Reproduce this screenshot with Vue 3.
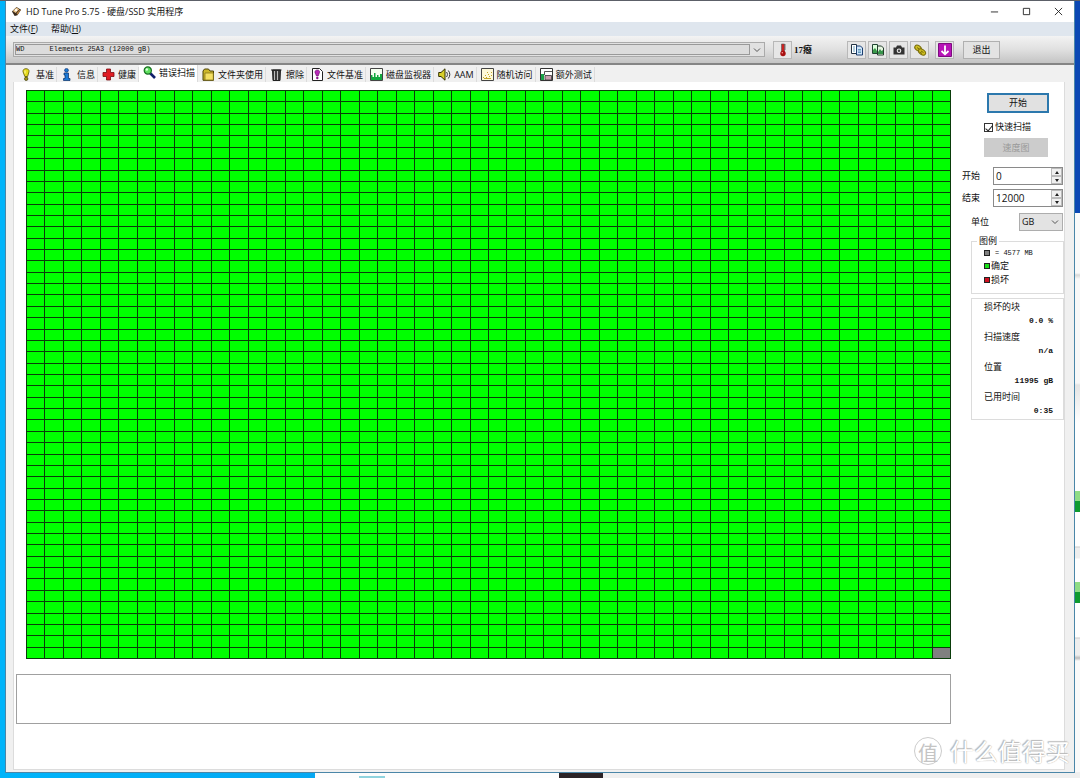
<script setup>
import { ref } from 'vue'

const cellCount = 50 * 50
const tabs = [
  { icon: 'bulb', label: '基准' },
  { icon: 'info', label: '信息' },
  { icon: 'cross', label: '健康' },
  { icon: 'lens', label: '错误扫描' },
  { icon: 'folder', label: '文件夹使用' },
  { icon: 'bin', label: '擦除' },
  { icon: 'filebulb', label: '文件基准' },
  { icon: 'chart', label: '磁盘监视器' },
  { icon: 'speaker', label: 'AAM' },
  { icon: 'scatter', label: '随机访问' },
  { icon: 'extra', label: '额外测试' },
]
const active = ref('lens')
const quick = ref(true)
const from = ref('0')
const to = ref('12000')
const stats = [
  { label: '损坏的块', value: '0.0 %' },
  { label: '扫描速度', value: 'n/a' },
  { label: '位置', value: '11995 gB' },
  { label: '已用时间', value: '0:35' },
]
</script>

<template>
  <div class="desktop">
    <div class="behind-right" aria-hidden="true">
      <i class="wall"></i><i class="page"></i><i class="green"></i><i class="page2"></i><i class="green"></i><i class="page3"></i>
    </div>
    <div class="behind-bottom" aria-hidden="true">
      <i class="sky"></i><i class="light"></i><i class="dark"></i><i class="grey"></i>
    </div>

    <div class="window">
      <header class="titlebar">
        <svg class="app-icon" viewBox="0 0 12 12">
          <path d="M1 6 6 1l5 3-4 6-3 1z" fill="#3a2b1c" />
          <path d="M2 5.500 6 1.500l3 2-4 4z" fill="#e9c48c" />
          <path d="M6 8 9.500 4l1 .6L7 9.500z" fill="#b98142" />
          <circle cx="5.500" cy="4.500" r="1.200" fill="#fff" />
        </svg>
        <h1>HD Tune Pro 5.75 - 硬盘/SSD 实用程序</h1>
        <div class="win-buttons">
          <button aria-label="最小化"><svg viewBox="0 0 10 10"><path d="M1 5.500h8" /></svg></button>
          <button aria-label="最大化"><svg viewBox="0 0 10 10"><path d="M1.500 1.500h7v7h-7z" /></svg></button>
          <button aria-label="关闭"><svg viewBox="0 0 10 10"><path d="m1 1 8 8M9 1 1 9" /></svg></button>
        </div>
      </header>

      <nav class="menu">
        <button>文件(<u>F</u>)</button>
        <button>帮助(<u>H</u>)</button>
      </nav>

      <div class="toolbar">
        <div class="drive">
          <select aria-label="硬盘">
            <option>WD&nbsp;&nbsp;&nbsp;&nbsp;&nbsp;&nbsp;Elements 25A3 (12000 gB)</option>
          </select>
          <svg viewBox="0 0 8 8"><path d="m1 2.500 3 3 3-3" /></svg>
        </div>
        <button class="tool" aria-label="温度">
          <svg viewBox="0 0 14 14">
            <path d="M5.500 1h3v8h-3z" fill="#c22" stroke="#555" stroke-width=".6" />
            <path d="M8.500 2H10M8.500 4H10M8.500 6H10" stroke="#444" stroke-width=".7" />
            <circle cx="7" cy="10.500" r="2.700" fill="#a81111" />
            <circle cx="6.300" cy="9.800" r=".8" fill="#f99" />
          </svg>
        </button>
        <strong class="temp">17癈</strong>
        <div class="tools">
          <button class="tool" aria-label="复制信息">
            <svg viewBox="0 0 14 14">
              <path d="M1.500 1.500h5v9h-5z" fill="#fff" stroke="#234" />
              <path d="M3 4h2M3 6h2M3 8h2" stroke="#48a" stroke-width=".8" />
              <path d="M6.500 3h4l2 2v7h-6z" fill="#cfe4fa" stroke="#1b3f70" />
              <path d="M8 6.500h3M8 8h3M8 9.500h3" stroke="#48a" stroke-width=".8" />
            </svg>
          </button>
          <button class="tool" aria-label="复制截图">
            <svg viewBox="0 0 14 14">
              <path d="M1.500 1.500h5v9h-5z" fill="#dfd" stroke="#243" />
              <path d="M2 7l2-2 2 3v2H2z" fill="#3a9a4a" />
              <path d="M6.500 3h4l2 2v7h-6z" fill="#e6f5e0" stroke="#243c2c" />
              <path d="M7 9l2-3 1.500 2L12 7v4H7z" fill="#36944a" />
            </svg>
          </button>
          <button class="tool" aria-label="截图">
            <svg viewBox="0 0 14 14">
              <path d="M1.500 4.500H4L5 2.500h4l1 2h2.500v7h-11z" fill="#333" />
              <circle cx="7" cy="7.800" r="2.300" fill="#eee" />
              <circle cx="7" cy="7.800" r="1.200" fill="#444" />
            </svg>
          </button>
          <button class="tool" aria-label="选项">
            <svg viewBox="0 0 14 14">
              <ellipse cx="5" cy="5" rx="3.500" ry="2.500" transform="rotate(35 5 5)" fill="#cdbd20" stroke="#776b08" />
              <ellipse cx="9" cy="9" rx="4" ry="2.500" transform="rotate(35 9 9)" fill="#cdbd20" stroke="#776b08" />
              <path d="M4 4.500 6 6M8 8l2.500 1.500M6.500 9 9 10.500" stroke="#776b08" />
            </svg>
          </button>
          <button class="tool save" aria-label="保存">
            <svg viewBox="0 0 14 14">
              <path d="M.5.500h13v13H.5z" fill="#b713b7" stroke="#7d0c7f" />
              <path d="M7 2.500v8M3.500 8 7 11.300 10.500 8" fill="none" stroke="#fff" stroke-width="1.800" />
            </svg>
          </button>
        </div>
        <button class="exit">退出</button>
      </div>

      <div class="body">
        <div class="tabs" role="tablist">
          <button
            v-for="t in tabs"
            :key="t.icon"
            role="tab"
            :aria-selected="active === t.icon"
            :class="['tab', { on: active === t.icon }]"
            @click="active = t.icon"
          >
            <svg viewBox="0 0 13 13">
              <g v-if="t.icon === 'bulb'">
                <path d="M6 .700c2 0 3.300 1.200 3 3L7.600 8.500H4.800L3 3.700c-.2-1.800 1-3 3-3z" fill="#e8dc1c" stroke="#5c5600" stroke-width=".8" />
                <path d="M5 2.500v3" stroke="#fffcb0" />
                <circle cx="6.200" cy="10.800" r="1.700" fill="#a59a10" stroke="#333000" stroke-width=".7" />
              </g>
              <g v-else-if="t.icon === 'info'">
                <circle cx="5.500" cy="2.300" r="1.900" fill="#1d7ad6" stroke="#052e66" stroke-width=".6" />
                <path d="M3 5h4.500v5.500H9v2H2.500v-2H4V7H3z" fill="#1d7ad6" stroke="#052e66" stroke-width=".7" />
              </g>
              <path v-else-if="t.icon === 'cross'" d="M4.500 1h4v3.500H12v4H8.500V12h-4V8.500H1v-4h3.500z" fill="#e01c24" stroke="#7a0a10" stroke-width=".8" />
              <g v-else-if="t.icon === 'lens'">
                <path d="m7 7 5 5" stroke="#10206c" stroke-width="2.600" />
                <circle cx="4.800" cy="4.500" r="3.600" fill="#5fe05f" stroke="#16701f" stroke-width="1.200" />
                <circle cx="3.800" cy="3.500" r="1.200" fill="#dfffdf" />
              </g>
              <g v-else-if="t.icon === 'folder'">
                <path d="M1 3 2.500 1h4L8 3h3.500v9.300H1z" fill="#cbb62a" stroke="#4c4208" />
                <path d="M3 5h8.300v7H3z" fill="#f3df62" stroke="#7c6b12" stroke-width=".7" />
              </g>
              <g v-else-if="t.icon === 'bin'">
                <path d="M1 2h10.500M2.500 2l.500 10.500h7L10.500 2z" fill="#3c3c3c" stroke="#222" />
                <path d="M4.500 3v9M7.500 3v9" stroke="#bbb" />
              </g>
              <g v-else-if="t.icon === 'filebulb'">
                <path d="M1.500.500h7l3 3v9h-10z" fill="#fff" stroke="#222" />
                <path d="M6.300 2C8 2 8.800 3 8.500 4.500L7.200 8H5.500L4 4.500C3.800 3 4.700 2 6.300 2z" fill="#b828b8" stroke="#5c0c5c" stroke-width=".6" />
                <circle cx="6.300" cy="10" r="1.200" fill="#8b168b" />
              </g>
              <g v-else-if="t.icon === 'chart'">
                <path d="M.5.500h12v12H.5z" fill="#f6fff0" stroke="#444" />
                <path d="M1 12V7h1.500v2H4V5h1.500v4H7V7h1.500v2H10V6h2v6z" fill="#12a83c" />
              </g>
              <g v-else-if="t.icon === 'speaker'">
                <path d="M.7 4.500H3l4-3.700v11.400L3 8.500H.7z" fill="#d8cf2a" stroke="#333000" />
                <path d="M8.500 4c1.200 1.500 1.200 3.500 0 5M10.300 2.500c2 2.500 2 5.500 0 8" fill="none" stroke="#333" />
              </g>
              <g v-else-if="t.icon === 'scatter'">
                <path d="M.5.500h12v12H.5z" fill="#fdf8d8" stroke="#444" />
                <path d="M2 9h1v1H2zM4 7h1v1H4zM5 9h1v1H5zM7 6h1v1H7zM8 8h1v1H8zM10 4h1v1h-1zM10 7h1v1h-1zM6 4h1v1H6zM3 10h7v1H3z" fill="#c3a52a" />
              </g>
              <g v-else>
                <path d="M.5.500h12v12H.5z" fill="#fff" stroke="#333" />
                <path d="M1 6h3v6H1z" fill="#1aa048" />
                <path d="M5 7.500h6.500v4.500H5z" fill="#c8a0b0" stroke="#333" stroke-width=".8" />
                <path d="M4.500 7V3.500H12" fill="none" stroke="#555" />
              </g>
            </svg>
            <span>{{ t.label }}</span>
          </button>
        </div>

        <main class="panel">
          <section class="left">
            <div class="map" aria-label="扫描结果">
              <i v-for="n in cellCount" :key="n" :class="{ pending: n === cellCount }"></i>
            </div>
            <div class="log"></div>
          </section>

          <aside class="side">
            <button class="start">开始</button>
            <label class="check"><input v-model="quick" type="checkbox" /><span>快速扫描</span></label>
            <button class="speed" disabled>速度图</button>

            <div class="field">
              <label for="from">开始</label>
              <div class="spin">
                <input id="from" v-model="from" type="text" />
                <span><button aria-label="增加开始"></button><button class="down" aria-label="减少开始"></button></span>
              </div>
            </div>
            <div class="field">
              <label for="to">结束</label>
              <div class="spin">
                <input id="to" v-model="to" type="text" />
                <span><button aria-label="增加结束"></button><button class="down" aria-label="减少结束"></button></span>
              </div>
            </div>
            <div class="field unit">
              <label for="unit">单位</label>
              <div class="pick">
                <select id="unit"><option>GB</option></select>
                <svg viewBox="0 0 8 8"><path d="m1 2.500 3 3 3-3" /></svg>
              </div>
            </div>

            <fieldset class="legend">
              <legend>图例</legend>
              <p class="mono"><i class="grey"></i>= 4577 MB</p>
              <p><i class="ok"></i>确定</p>
              <p><i class="bad"></i>损坏</p>
            </fieldset>

            <dl class="stats">
              <template v-for="s in stats" :key="s.label">
                <dt>{{ s.label }}</dt>
                <dd>{{ s.value }}</dd>
              </template>
            </dl>
          </aside>
        </main>
      </div>
    </div>

    <div class="watermark"><b>值</b><span>什么值得买</span></div>
  </div>
</template>

<style>
body {
  background: #00a8f3;
}
</style>

<style scoped>
* {
  box-sizing: border-box;
}
button,
input,
select {
  font: inherit;
  color: inherit;
  margin: 0;
  padding: 0;
  border: 0;
  border-radius: 0;
  background: none;
  appearance: none;
}
.desktop {
  position: relative;
  display: flex;
  min-height: 100vh;
  padding: 0 5px 5px 5px;
  background: linear-gradient(90deg, #00b4fa, #0a9cec 60%);
  border-top: 1px solid #5c6068;
  font: 9px/12px "Open Sans", "Noto Sans CJK SC", sans-serif;
  color: #111;
}
.behind-right {
  position: absolute;
  inset: 0 0 0 auto;
  width: 6px;
  display: flex;
  flex-direction: column;
  background: #f6f6f6;
}
.behind-right .wall {
  height: 212px;
  background: #0b48b4;
}
.behind-right .page {
  height: 278px;
  background: linear-gradient(#fafafa 60px, #d8d8d8 62px, #f8f8f8 66px, #f8f8f8 170px, #e4e4e4 172px, #fff 210px);
}
.behind-right .green {
  height: 21px;
  background: linear-gradient(#8fdc84 10px, #0f9a30 10px);
}
.behind-right .page2 {
  height: 70px;
  background: linear-gradient(#fff 34px, #ccc 35px, #eee 36px, #eee 46px, #fff 47px);
}
.behind-right .page3 {
  flex: 1;
  background: linear-gradient(#fff 34px, #ccc 35px, #eee 36px, #eee 52px, #bbb 55px, #fafafa 58px);
}
.behind-bottom {
  position: absolute;
  inset: auto 0 0 0;
  height: 6px;
  display: flex;
}
.behind-bottom .sky {
  width: 29.2%;
}
.behind-bottom .light {
  width: 22.6%;
  background: linear-gradient(#8fd3de, #8fd3de) 44px 4px / 26px 2px no-repeat #fdfdfd;
}
.behind-bottom .dark {
  width: 4%;
  background: #2a2326;
}
.behind-bottom .grey {
  flex: 1;
  background: #efefef;
}
.window {
  position: relative;
  flex: 1;
  min-width: 0;
  display: flex;
  flex-direction: column;
  background: #f0f0f0;
  border: 1px solid #4a86a8;
  border-top: 0;
}
.titlebar {
  display: flex;
  align-items: center;
  height: 21px;
  padding-left: 5px;
  background: #fff;
}
.app-icon {
  width: 11px;
  height: 11px;
}
h1 {
  flex: 1;
  margin: 0 0 0 4px;
  font-size: 9px;
  font-weight: 400;
}
.win-buttons {
  display: flex;
}
.win-buttons button {
  width: 32px;
  height: 20px;
  display: grid;
  place-items: center;
}
.win-buttons svg {
  width: 9px;
  height: 9px;
  fill: none;
  stroke: #222;
  stroke-width: 1;
}
.menu {
  display: flex;
  gap: 13px;
  height: 14px;
  padding-left: 4px;
  background: #dfe6ee;
  line-height: 12px;
}
.toolbar {
  display: flex;
  align-items: center;
  height: 29px;
  padding: 0 74px 0 7px;
  background: linear-gradient(#f3f3f3, #e0e0e0 50%, #c4c4c4);
  border-bottom: 2px solid #858585;
}
.drive {
  position: relative;
  flex: 1;
  height: 15px;
  padding: 1px 14px 1px 1px;
  border: 1px solid #aaa;
  background: #e1e1e1;
}
.drive select {
  display: block;
  width: 100%;
  height: 11px;
  border: 1px solid #999;
  background: #dcdcdc;
  font: 7px/9px "Liberation Mono", monospace;
}
.drive svg,
.pick svg {
  position: absolute;
  right: 3px;
  top: 3px;
  width: 8px;
  height: 8px;
  fill: none;
  stroke: #555;
  pointer-events: none;
}
.tool {
  display: grid;
  place-items: center;
  width: 19px;
  height: 18px;
  border: 1px solid #b8b8b8;
  background: #e6e6e6;
}
.tool svg {
  width: 14px;
  height: 14px;
}
.drive + .tool {
  margin-left: 8px;
}
.temp {
  width: 53px;
  margin-left: 2px;
  font: bold 9px/12px "Liberation Serif", "Noto Sans CJK SC", serif;
}
.tools {
  display: flex;
  gap: 2px;
}
.tools .save {
  margin-left: 4px;
}
.exit {
  width: 37px;
  height: 18px;
  margin-left: 9px;
  border: 1px solid #b0b0b0;
  background: #e3e3e3;
}
.body {
  flex: 1;
  display: flex;
  flex-direction: column;
  padding: 0 9px 2px 7px;
}
.tabs {
  display: flex;
  align-items: flex-end;
  height: 17px;
  padding-left: 3px;
}
.tab {
  display: flex;
  align-items: center;
  gap: 3px;
  height: 15px;
  padding: 0 2px 0 4px;
  border-right: 1px solid #dcdcdc;
  white-space: nowrap;
}
.tab svg {
  flex: none;
  width: 13px;
  height: 13px;
}
.tab.on {
  height: 17px;
  padding-bottom: 2px;
  background: #fff;
}
.panel {
  flex: 1;
  display: flex;
  padding: 8px 0 0 2px;
  background: #fff;
  border: 1px solid #dcdcdc;
  border-top: 0;
}
.left {
  flex: 1;
  display: flex;
  flex-direction: column;
  padding-bottom: 45px;
}
.map {
  flex: 1;
  display: grid;
  grid-template: repeat(50, 1fr) / repeat(50, 1fr);
  margin-left: 10px;
  border: solid #0a3c0a;
  border-width: 1px 0 0 1px;
}
.map i {
  background: #0f0;
  border: solid #0a3c0a;
  border-width: 0 1px 1px 0;
}
.map .pending {
  background: #808080;
}
.log {
  height: 50px;
  margin-top: 15px;
  border: 1px solid #a0a0a0;
}
.side {
  display: flex;
  flex-direction: column;
  width: 113px;
  padding: 3px 0 0 11px;
}
.start {
  width: 62px;
  height: 20px;
  margin-left: 25px;
  border: 2px solid #2c78ad;
  background: #e1e1e1;
}
.check {
  display: flex;
  align-items: center;
  gap: 2px;
  height: 12px;
  margin: 8px 0 5px 22px;
}
.check input {
  display: grid;
  place-items: center;
  width: 9px;
  height: 9px;
  border: 1px solid #333;
}
.check input:checked::after {
  content: "";
  width: 3px;
  height: 6px;
  border: solid #222;
  border-width: 0 1px 1px 0;
  transform: rotate(40deg);
}
.speed {
  width: 64px;
  height: 19px;
  margin-left: 22px;
  background: #ccc;
  color: #999;
}
.field {
  display: flex;
  align-items: center;
  justify-content: space-between;
  height: 18px;
  margin: 10px 1px 0 0;
}
.field + .field {
  margin-top: 4px;
}
.spin {
  display: flex;
  width: 70px;
  height: 18px;
  border: 1px solid #8a8a8a;
}
.spin input {
  flex: 1;
  min-width: 0;
  padding-left: 2px;
  font-size: 10px;
}
.spin span {
  display: flex;
  flex-direction: column;
  width: 11px;
}
.spin button {
  flex: 1;
  display: grid;
  place-items: center;
  border: 1px solid #bbb;
  background: #f0f0f0;
}
.spin button::after {
  content: "";
  border: 2px solid transparent;
  border-top: 0;
  border-bottom: 3px solid #222;
}
.spin .down::after {
  border-top: 3px solid #222;
  border-bottom: 0;
}
.field + .unit {
  margin: 6px 1px 0 9px;
}
.pick {
  position: relative;
  width: 44px;
  height: 18px;
  border: 1px solid #adadad;
  background: #e3e3e3;
}
.pick select {
  width: 100%;
  height: 16px;
  padding-left: 2px;
}
.pick svg {
  top: 4px;
}
.legend {
  height: 59px;
  margin: 4px 0 0 9px;
  padding: 0 0 0 12px;
  border: 1px solid #dcdcdc;
}
.legend legend {
  height: 12px;
  margin-left: -7px;
}
.legend p {
  display: flex;
  align-items: center;
  gap: 1px;
  height: 14px;
  margin: 0;
}
.legend .mono {
  gap: 5px;
  height: 12px;
  font: 7px/12px "Liberation Mono", monospace;
}
.legend i {
  width: 6px;
  height: 6px;
  border: 1px solid #222;
}
.legend .grey {
  background: #808080;
}
.legend .ok {
  background: #1be01b;
}
.legend .bad {
  background: #d01020;
}
.stats {
  height: 122px;
  margin: 4px 0 0 9px;
  padding: 2px 10px 0 12px;
  border: 1px solid #dcdcdc;
}
.stats dt {
  height: 13px;
}
.stats dd {
  height: 17px;
  margin: 0;
  text-align: right;
  font: bold 8px/14px "Liberation Mono", monospace;
}
.watermark {
  position: absolute;
  right: 10px;
  bottom: 12px;
  display: flex;
  align-items: center;
  gap: 8px;
  color: #fff;
  font: 24px/30px "Noto Sans CJK SC", sans-serif;
  text-shadow: 0 0 1px #999, -1px -1px 1px #bbb;
}
.watermark b {
  display: grid;
  place-items: center;
  width: 28px;
  height: 28px;
  border: 1px solid #ccc;
  border-radius: 50%;
  color: #c4c4c4;
  font-size: 20px;
  font-weight: 400;
  text-shadow: none;
}
</style>
